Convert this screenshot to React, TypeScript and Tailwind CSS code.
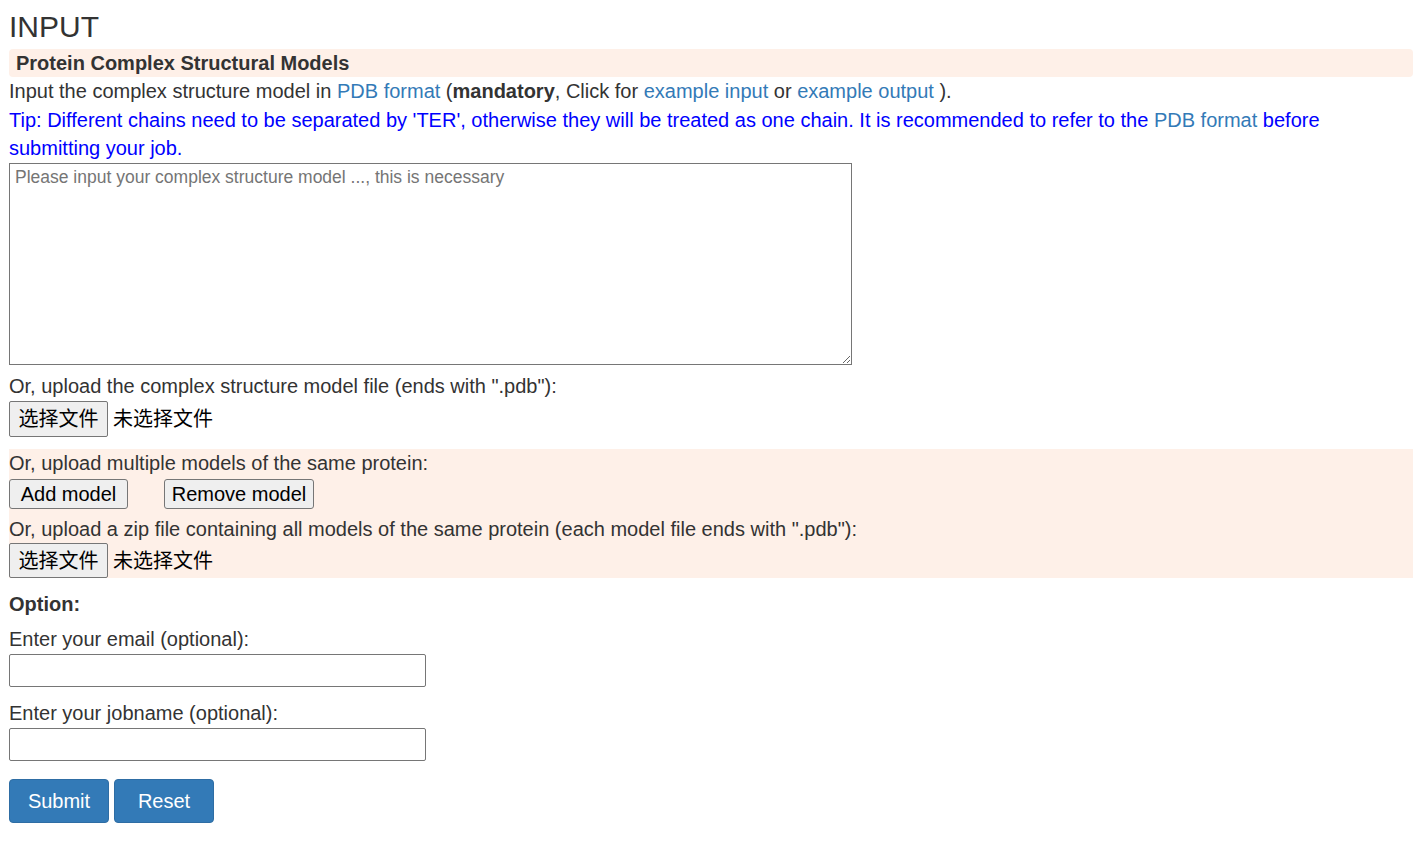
import React from "react";

const FONT = { fontFamily: '"Liberation Sans", Arial, "Noto Sans CJK SC", sans-serif' };

function FakeFile({ h }: { h: string }) {
  return (
    <div className={"flex items-center " + h}>
      <button className={"w-[99px] bg-[#efefef] border border-[#767676] rounded-[2px] text-[20px] text-black flex items-center justify-center " + h}>
        选择文件
      </button>
      <span className="ml-[5px] text-[20px] text-black">未选择文件</span>
    </div>
  );
}

export default function App() {
  return (
    <div className="bg-white min-h-[841px] pl-[9px] pr-[2px] text-[#333] text-[20px] leading-[1.42857]" style={FONT}>
      <h3 className="pt-[9px] text-[30px] leading-[35px] font-normal text-[#333]">INPUT</h3>
      <div className="mt-[5px] h-[28px] bg-[#fef0e8] rounded-[4px] pl-[7px] font-bold leading-[28px]">
        Protein Complex Structural Models
      </div>
      <div>
        Input the complex structure model in <a className="text-[#337ab7]">PDB format</a> (<b>mandatory</b>, Click for{" "}
        <a className="text-[#337ab7]">example input</a> or <a className="text-[#337ab7]">example output</a> ).
      </div>
      <div className="text-[#0000ff] pr-[80px]">
        Tip: Different chains need to be separated by 'TER', otherwise they will be treated as one chain. It is recommended
        to refer to the <a className="text-[#337ab7]">PDB format</a> before submitting your job.
      </div>
      <textarea
        className="block w-[843px] h-[202px] border border-[#767676] px-[5px] pt-[2px] text-[17.5px] leading-[22px] placeholder:text-[#757575] text-black"
        style={FONT}
        placeholder="Please input your complex structure model ..., this is necessary"
      />
      <div className="mt-[7px]">Or, upload the complex structure model file (ends with ".pdb"):</div>
      <div className="pt-[1px]">
        <FakeFile h="h-[36px]" />
      </div>
      <div className="mt-[12px] bg-[#fef0e8]">
        <div>Or, upload multiple models of the same protein:</div>
        <div className="mt-[1px] flex gap-[36px] h-[30px]">
          <button className="h-[30px] w-[119px] bg-[#efefef] border border-[#767676] rounded-[3px] text-[20px] text-black">
            Add model
          </button>
          <button className="h-[30px] w-[150px] bg-[#efefef] border border-[#767676] rounded-[3px] text-[20px] text-black">
            Remove model
          </button>
        </div>
        <div className="mt-[6px]">Or, upload a zip file containing all models of the same protein (each model file ends with ".pdb"):</div>
        <div>
          <FakeFile h="h-[35px]" />
        </div>
      </div>
      <div className="mt-[12px] font-bold">Option:</div>
      <div className="mt-[6px]">Enter your email (optional):</div>
      <input className="block w-[417px] h-[33px] border border-[#767676] rounded-[2px] bg-white" />
      <div className="mt-[12px]">Enter your jobname (optional):</div>
      <input className="block mt-[1px] w-[417px] h-[33px] border border-[#767676] rounded-[2px] bg-white" />
      <div className="mt-[18px] flex gap-[5px]">
        <button className="h-[44px] w-[100px] bg-[#337ab7] border border-[#2e6da4] rounded-[4px] text-white text-[20px]">
          Submit
        </button>
        <button className="h-[44px] w-[100px] bg-[#337ab7] border border-[#2e6da4] rounded-[4px] text-white text-[20px]">
          Reset
        </button>
      </div>
    </div>
  );
}
